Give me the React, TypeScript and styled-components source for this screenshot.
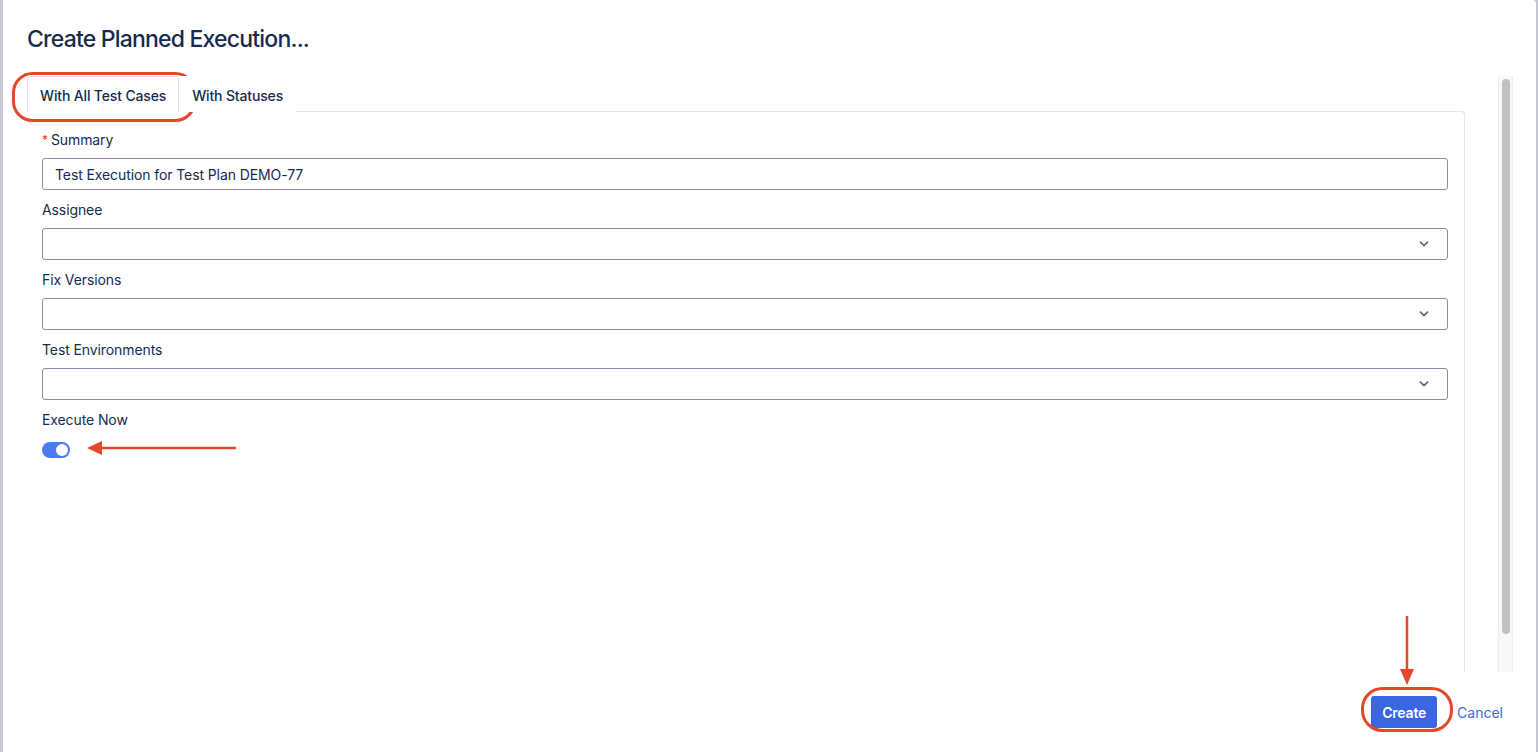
import React from "react";
import styled, { createGlobalStyle } from "styled-components";

const Global = createGlobalStyle`
  html, body { margin: 0; padding: 0; }
  body {
    background: #c5c8d2;
    font-family: Inter, "Noto Sans", "Liberation Sans", sans-serif;
    color: #172b4d;
    overflow: hidden;
  }
`;

const Page = styled.div`
  position: relative;
  height: 752px;
  width: 1538px;
  display: flex;
  padding-left: 3px;
  box-sizing: border-box;
`;

const Dialog = styled.div`
  width: 1533px;
  height: 780px;
  background: #fff;
  border-radius: 0 4px 0 0;
  box-sizing: border-box;
  padding: 24px 23px 0 24px;
  display: flex;
  flex-direction: column;
`;

const Title = styled.h1`
  margin: 0 0 22px;
  font-size: 23px;
  line-height: 30px;
  font-weight: 500;
  letter-spacing: -0.8px;
  color: #172b4d;
`;

const Body = styled.div`
  height: 596px;
  display: flex;
  overflow: hidden;
`;

const Content = styled.div`
  flex: 1;
  overflow: hidden;
  padding-right: 33px;
`;

const ScrollTrack = styled.div`
  width: 15px;
  flex: none;
  box-sizing: border-box;
  background: #f8f8f8;
  border-left: 1px solid #ececec;
  border-right: 1px solid #ececec;
  padding: 3px 2px 0 3px;
`;

const ScrollThumb = styled.div`
  height: 555px;
  border-radius: 4px;
  background: #c1c1c1;
`;

const TabList = styled.div`
  display: flex;
  height: 35px;
`;

const Tab = styled.div<{ $active?: boolean }>`
  padding: 1px 12px 0;
  display: flex;
  align-items: center;
  font-size: 14px;
  font-weight: 500;
  letter-spacing: -0.15px;
  color: #172b4d;
  border: 1px solid ${(p) => (p.$active ? "#dfe1e6" : "transparent")};
  border-bottom: none;
  border-radius: 3px 3px 0 0;
  background: #fff;
  position: relative;
  z-index: 1;
  height: 36px;
  box-sizing: border-box;
`;

const Panel = styled.div`
  border-top: 1px solid #e4e5e9;
  border-right: 1px solid #e4e5e9;
  border-top-right-radius: 4px;
  height: 600px;
  box-sizing: border-box;
  padding: 18px 16px 0 15px;
`;

const Field = styled.div`
  display: flex;
  flex-direction: column;
  gap: 8px;
  margin-bottom: 10px;
`;

const Label = styled.label`
  font-size: 14px;
  line-height: 20px;
  letter-spacing: -0.1px;
  color: #172b4d;
  display: flex;
  gap: 3px;
`;

const Req = styled.span`
  color: #de350b;
  font-size: 12px;
`;

const Input = styled.div`
  height: 32px;
  box-sizing: border-box;
  border: 1px solid #8590a2;
  border-radius: 3px;
  display: flex;
  align-items: center;
  justify-content: space-between;
  padding: 0 18px 0 12px;
  font-size: 14px;
  letter-spacing: -0.1px;
  color: #172b4d;
`;

const Chevron = () => (
  <svg width="10" height="6" viewBox="0 0 10 6" fill="none">
    <path d="M1.5 1.2 L5 4.6 L8.5 1.2" stroke="#5e6c84" strokeWidth="1.8" strokeLinecap="round" strokeLinejoin="round" />
  </svg>
);

const Toggle = styled.div`
  width: 28px;
  height: 16px;
  border-radius: 8px;
  background: #4a7cf0;
  box-sizing: border-box;
  padding: 2px;
  display: flex;
  justify-content: flex-end;
  margin-top: 4px;
`;

const Knob = styled.div`
  width: 12px;
  height: 12px;
  border-radius: 50%;
  background: #fff;
`;

const Footer = styled.div`
  display: flex;
  justify-content: flex-end;
  align-items: center;
  gap: 8px;
  margin-top: 24px;
`;

const PrimaryButton = styled.button`
  height: 32px;
  padding: 0 11px;
  border: none;
  border-radius: 3px;
  background: #3a66df;
  color: #fff;
  font-family: inherit;
  font-size: 14px;
  font-weight: 600;
  letter-spacing: -0.2px;
`;

const LinkButton = styled.button`
  height: 32px;
  padding: 0 10px 0 12px;
  border: none;
  background: transparent;
  color: #3b6be3;
  font-family: inherit;
  font-size: 14px;
  font-weight: 400;
`;

const Overlay = styled.svg`
  position: absolute;
  left: 0;
  top: 0;
  pointer-events: none;
`;

const RED = "#e5472a";

const fields = [
  { label: "Summary", required: true, value: "Test Execution for Test Plan DEMO-77", select: false },
  { label: "Assignee", select: true },
  { label: "Fix Versions", select: true },
  { label: "Test Environments", select: true },
];

export default function App() {
  return (
    <>
      <Global />
      <Page>
        <Dialog>
          <Title>Create Planned Execution...</Title>
          <Body>
            <Content>
              <TabList>
                <Tab $active>With All Test Cases</Tab>
                <Tab>With Statuses</Tab>
              </TabList>
              <Panel>
                {fields.map((f) => (
                  <Field key={f.label}>
                    <Label>
                      {f.required && <Req>*</Req>}
                      {f.label}
                    </Label>
                    <Input>
                      <span>{f.value ?? ""}</span>
                      {f.select && <Chevron />}
                    </Input>
                  </Field>
                ))}
                <Field>
                  <Label>Execute Now</Label>
                  <Toggle>
                    <Knob />
                  </Toggle>
                </Field>
              </Panel>
            </Content>
            <ScrollTrack>
              <ScrollThumb />
            </ScrollTrack>
          </Body>
          <Footer>
            <PrimaryButton>Create</PrimaryButton>
            <LinkButton>Cancel</LinkButton>
          </Footer>
        </Dialog>
        <Overlay width="1538" height="752" viewBox="0 0 1538 752">
          <rect x="13.5" y="73.5" width="181" height="47" rx="19" fill="none" stroke={RED} strokeWidth="3" />
          <line x1="100" y1="448" x2="236" y2="448" stroke={RED} strokeWidth="2.5" />
          <polygon points="87,448 102,441 102,455" fill={RED} />
          <line x1="1407" y1="616" x2="1407" y2="671" stroke={RED} strokeWidth="2.5" />
          <polygon points="1407,685 1400,669 1414,669" fill={RED} />
          <rect x="1362.5" y="688.5" width="89" height="42" rx="20" fill="none" stroke={RED} strokeWidth="3" />
        </Overlay>
      </Page>
    </>
  );
}
